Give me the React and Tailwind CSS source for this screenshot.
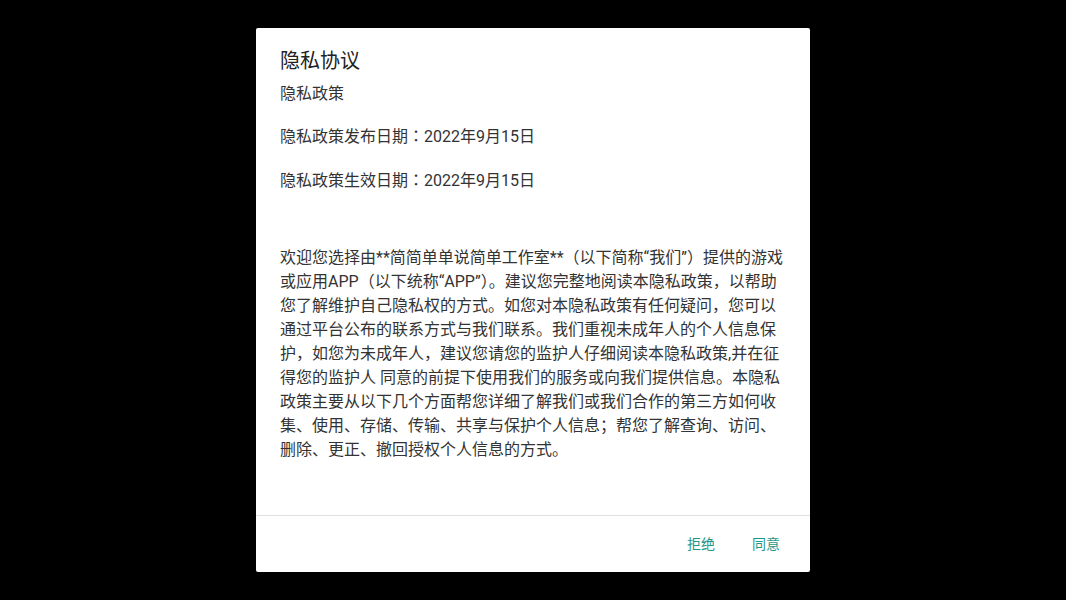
import React from 'react';

const lines = [
  '欢迎您选择由**简简单单说简单工作室**（以下简称“我们”）提供的游戏',
  '或应用APP（以下统称“APP”）。建议您完整地阅读本隐私政策，以帮助',
  '您了解维护自己隐私权的方式。如您对本隐私政策有任何疑问，您可以',
  '通过平台公布的联系方式与我们联系。我们重视未成年人的个人信息保',
  '护，如您为未成年人，建议您请您的监护人仔细阅读本隐私政策,并在征',
  '得您的监护人 同意的前提下使用我们的服务或向我们提供信息。本隐私',
  '政策主要从以下几个方面帮您详细了解我们或我们合作的第三方如何收',
  '集、使用、存储、传输、共享与保护个人信息；帮您了解查询、访问、',
  '删除、更正、撤回授权个人信息的方式。',
];

// full-width colon drawn centred, as on the device
const Colon = () => (
  <span style={{ fontFamily: '"Noto Sans CJK JP", sans-serif' }}>：</span>
);

export default function App() {
  return (
    <div
      className="h-screen w-full bg-black flex items-center justify-center"
      style={{ fontFamily: 'Roboto, "Noto Sans CJK SC", sans-serif' }}
    >
      <div className="w-[554px] h-[544px] bg-white rounded-[2px] flex flex-col">
        <div className="flex-1 overflow-hidden px-6 pt-[19px]">
          <h1 className="text-[20px] leading-7 text-[#222]">隐私协议</h1>
          <div className="text-[16px] leading-6 text-[#333]">
            <p className="mt-[7px] h-6">隐私政策</p>
            <p className="mt-[17px] h-6">隐私政策发布日期<Colon />2022年9月15日</p>
            <p className="mt-5 h-6">隐私政策生效日期<Colon />2022年9月15日</p>
            <div className="mt-[55px]">
              {lines.map((l, i) => (
                <div key={i} className="whitespace-nowrap">{l}</div>
              ))}
            </div>
          </div>
        </div>
        <div className="border-t border-[#e0e0e0] h-[57px] flex items-center justify-end gap-[21px] pr-[22px]">
          <button className="px-2 h-9 text-[14px] text-[#1f9688]">拒绝</button>
          <button className="px-2 h-9 text-[14px] text-[#1f9688]">同意</button>
        </div>
      </div>
    </div>
  );
}
